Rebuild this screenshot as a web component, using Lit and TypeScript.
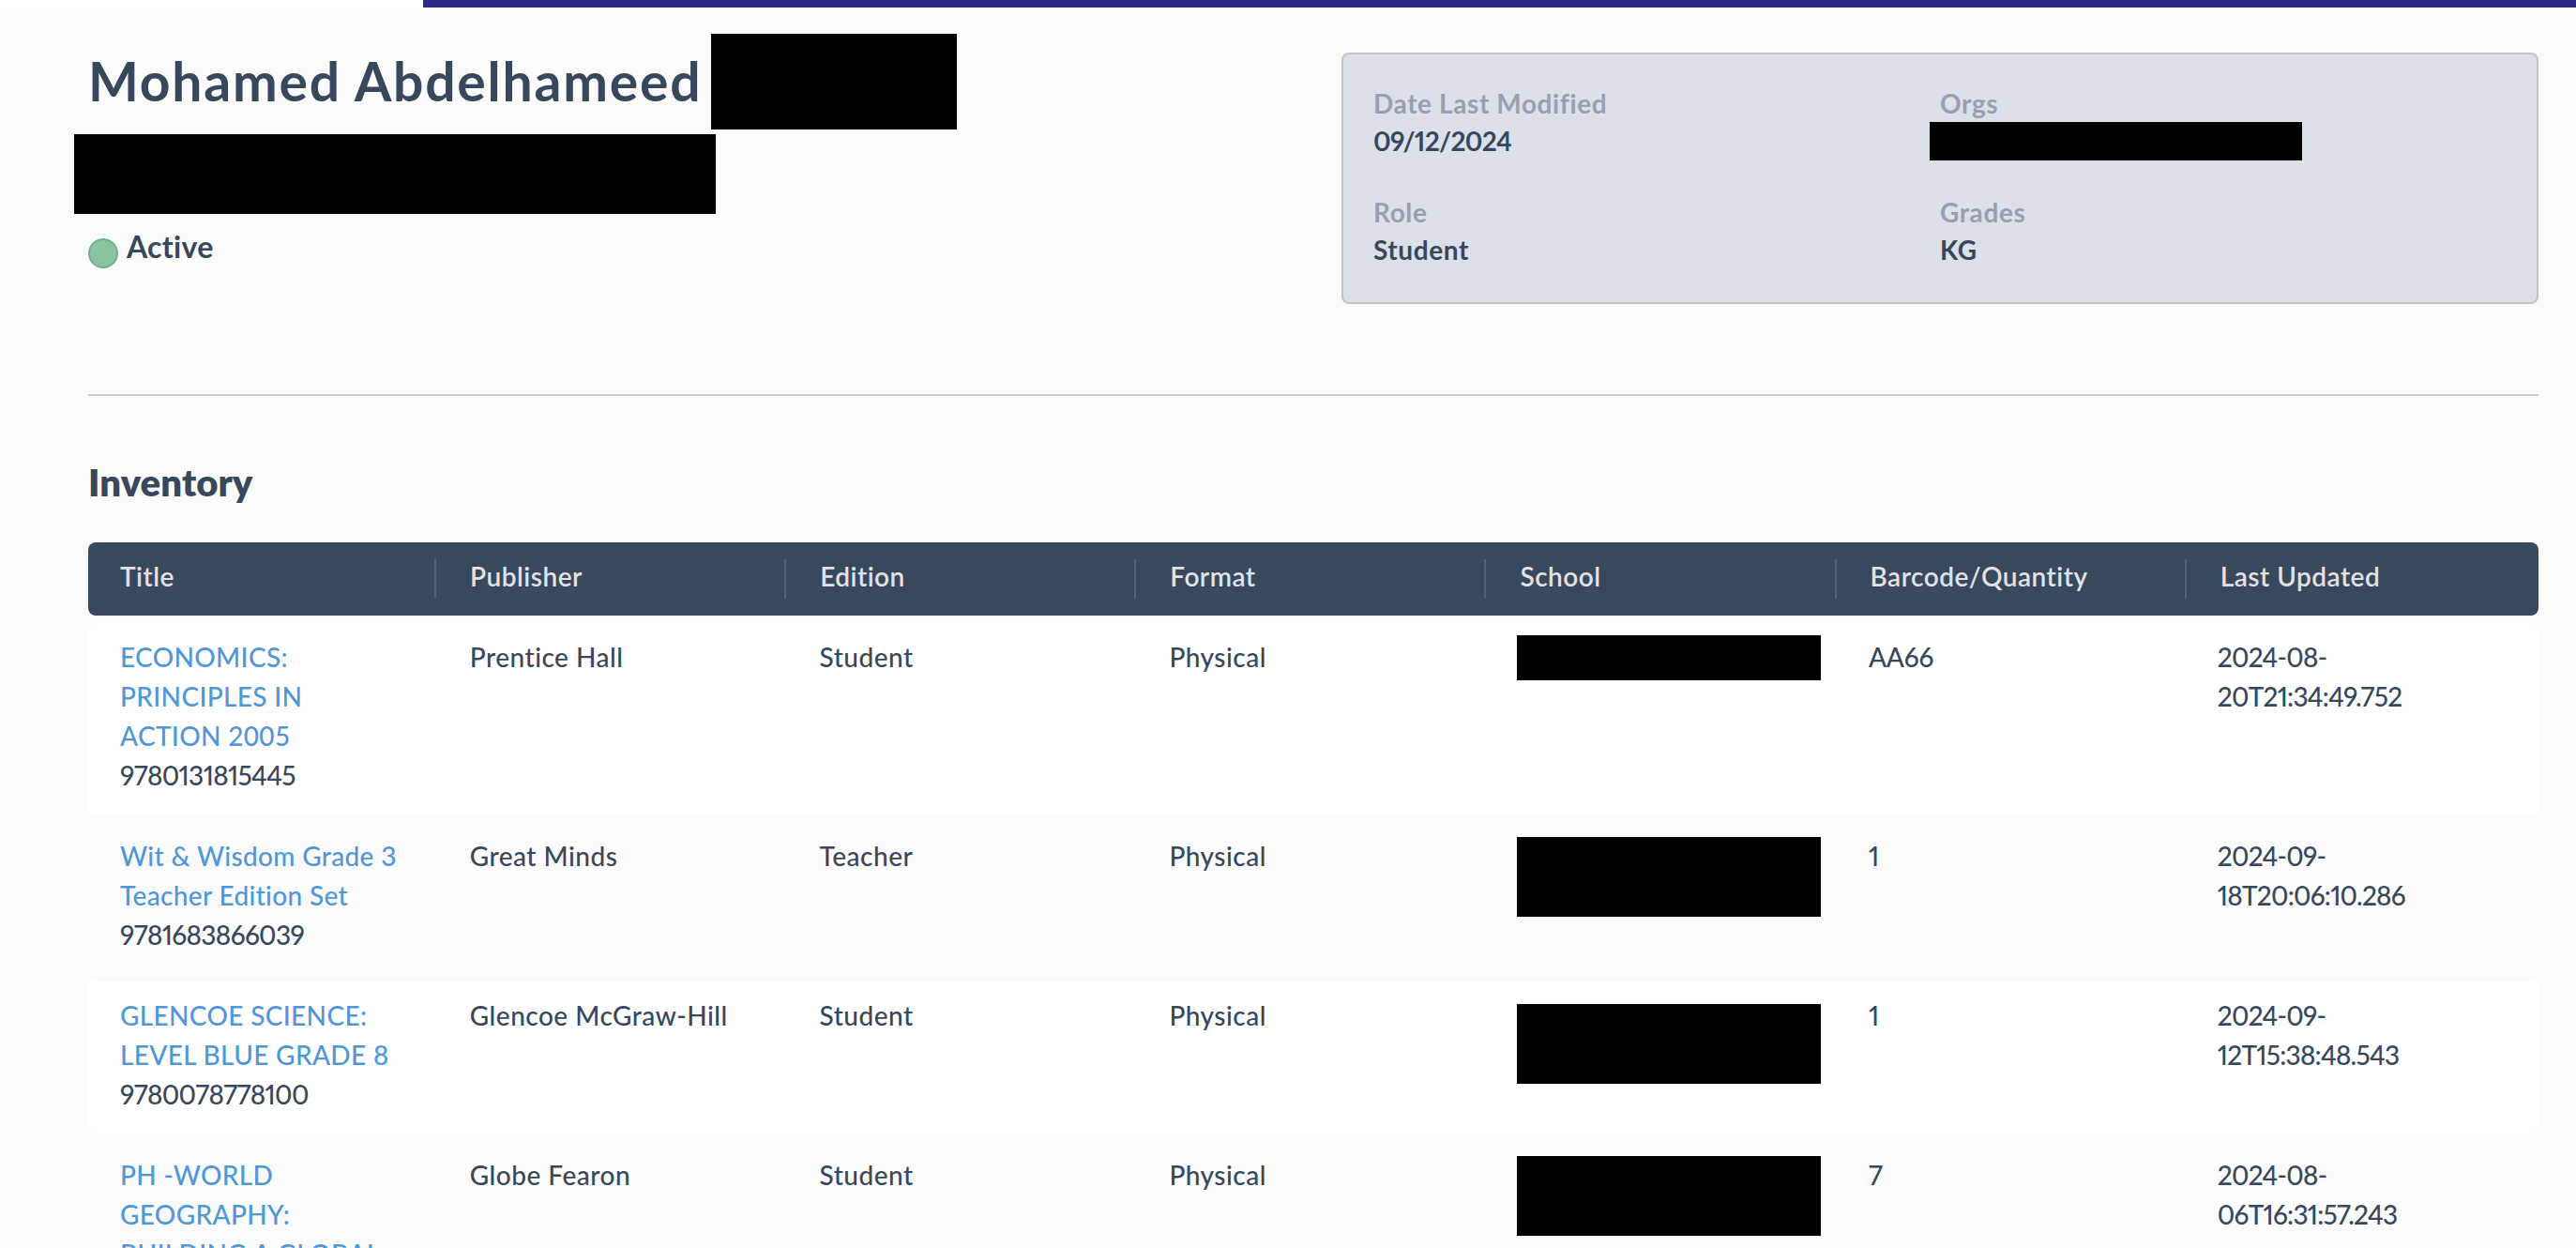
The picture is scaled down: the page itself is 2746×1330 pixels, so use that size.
import { LitElement, html, css } from 'lit';
import { customElement, property } from 'lit/decorators.js';

interface Item {
  title: string;
  isbn: string;
  publisher: string;
  edition: string;
  format: string;
  barcode: string;
  updated: string;
  // redaction bar over the school name: offset from the row top and height
  maskTop: number;
  maskHeight: number;
}

const ITEMS: Item[] = [
  {
    title: 'ECONOMICS:\nPRINCIPLES IN\nACTION 2005',
    isbn: '9780131815445',
    publisher: 'Prentice Hall',
    edition: 'Student',
    format: 'Physical',
    barcode: 'AA66',
    updated: '2024-08-\n20T21:34:49.752',
    maskTop: 13,
    maskHeight: 48,
  },
  {
    title: 'Wit & Wisdom Grade 3\nTeacher Edition Set',
    isbn: '9781683866039',
    publisher: 'Great Minds',
    edition: 'Teacher',
    format: 'Physical',
    barcode: '1',
    updated: '2024-09-\n18T20:06:10.286',
    maskTop: 16,
    maskHeight: 85,
  },
  {
    title: 'GLENCOE SCIENCE:\nLEVEL BLUE GRADE 8',
    isbn: '9780078778100',
    publisher: 'Glencoe McGraw-Hill',
    edition: 'Student',
    format: 'Physical',
    barcode: '1',
    updated: '2024-09-\n12T15:38:48.543',
    maskTop: 24,
    maskHeight: 85,
  },
  {
    title: 'PH -WORLD\nGEOGRAPHY:\nBUILDING A GLOBAL',
    isbn: '',
    publisher: 'Globe Fearon',
    edition: 'Student',
    format: 'Physical',
    barcode: '7',
    updated: '2024-08-\n06T16:31:57.243',
    maskTop: 16,
    maskHeight: 85,
  },
];

const COLUMNS = ['Title', 'Publisher', 'Edition', 'Format', 'School', 'Barcode/Quantity', 'Last Updated'];

const ROW_PADDING_TOP = 15;

@customElement('user-details')
export class UserDetails extends LitElement {
  static styles = css`
    :host {
      display: grid;
      grid-template-columns: 604px 1fr;
      grid-auto-rows: 80px;
      row-gap: 36px;
      box-sizing: border-box;
      width: 1276px;
      height: 268px;
      padding: 32px;
      border: 2px solid #bfc4cd;
      border-radius: 8px;
      background: #dce0e9;
      font-size: 28px;
      line-height: 40px;
      letter-spacing: 0.6px;
    }

    .label {
      color: #989fb1;
      font-weight: 700;
    }

    .value {
      color: #37485d;
      font-weight: 700;
    }

    .num {
      font-feature-settings: 'pnum';
      letter-spacing: -0.7px;
    }

    .mask {
      width: 397px;
      height: 41px;
      margin-left: -11px;
      background: #000;
    }
  `;

  render() {
    return html`
      <div>
        <div class="label">Date Last Modified</div>
        <div class="value num">09/12/2024</div>
      </div>
      <div>
        <div class="label">Orgs</div>
        <div class="mask"></div>
      </div>
      <div>
        <div class="label">Role</div>
        <div class="value">Student</div>
      </div>
      <div>
        <div class="label">Grades</div>
        <div class="value">KG</div>
      </div>
    `;
  }
}

@customElement('inventory-table')
export class InventoryTable extends LitElement {
  static styles = css`
    :host {
      display: flex;
      flex-direction: column;
      gap: 8px;
      font-size: 28px;
      font-weight: 500;
      line-height: 42px;
      letter-spacing: 0.5px;
      color: #37485d;
    }

    .head,
    .row {
      display: grid;
      border-radius: 8px;
    }

    .head {
      grid-template-columns: 371px repeat(5, 373.15px) 1fr;
      height: 78px;
      align-items: center;
      background: #38495e;
      color: #e2e2e6;
      font-weight: 600;
      line-height: 36px;
    }

    .th {
      box-sizing: border-box;
      height: 42px;
      padding-left: 36px;
      border-right: 2px solid #54626f;
    }

    .th:first-child {
      padding-left: 34px;
    }

    .th:last-child {
      border-right: 0;
    }

    .row {
      grid-template-columns: repeat(7, 372.8px);
      padding: 15px 0 21px;
    }

    .row:nth-child(even) {
      background: #fff;
    }

    .cell {
      padding-left: 34px;
      white-space: pre-line;
    }

    .link {
      color: #4f97d9;
      letter-spacing: 0.35px;
    }

    .num {
      font-feature-settings: 'pnum';
      letter-spacing: -0.65px;
    }

    .barcode {
      font-feature-settings: 'pnum';
      letter-spacing: -0.2px;
    }

    .updated {
      padding-left: 33px;
      letter-spacing: -0.75px;
    }

    .mask {
      width: 324px;
      margin-left: -2px;
      background: #000;
    }
  `;

  @property({ attribute: false }) items: Item[] = [];

  render() {
    return html`
      <div class="head">${COLUMNS.map((c) => html`<div class="th">${c}</div>`)}</div>
      ${this.items.map(
        (item) => html`
          <div class="row">
            <div class="cell"><div class="link">${item.title}</div><div class="num">${item.isbn}</div></div>
            <div class="cell">${item.publisher}</div>
            <div class="cell">${item.edition}</div>
            <div class="cell">${item.format}</div>
            <div class="cell"><div
              class="mask"
              style="height: ${item.maskHeight}px; margin-top: ${item.maskTop - ROW_PADDING_TOP}px"
            ></div></div>
            <div class="cell barcode">${item.barcode}</div>
            <div class="cell num updated">${item.updated}</div>
          </div>
        `
      )}
    `;
  }
}

@customElement('app-root')
export class AppRoot extends LitElement {
  static styles = css`
    :host {
      display: block;
      height: 1330px;
      overflow: hidden;
      background: #fbfbfb;
      color: #37485d;
      font-family: Lato, 'Open Sans', sans-serif;
      font-variant-ligatures: none;
    }

    .topbar {
      height: 8px;
      padding-left: 451px;
      background: linear-gradient(#2d2986, #2d2986) content-box, #fff;
    }

    .page {
      padding: 0 40px 0 94px;
    }

    .profile {
      display: flex;
      justify-content: space-between;
      height: 414px;
      box-sizing: border-box;
      border-bottom: 2px solid #c9cfd8;
    }

    .name {
      display: flex;
      align-items: center;
      gap: 12px;
      height: 102px;
      margin: 28px 0 0;
      font-size: 57px;
      font-weight: 700;
    }

    .name-text {
      width: 652px;
      margin-top: -2px;
      letter-spacing: 1.8px;
      white-space: nowrap;
    }

    .name-mask {
      width: 262px;
      height: 102px;
      background: #000;
    }

    .id-mask {
      width: 684px;
      height: 85px;
      margin: 5px 0 0 -15px;
      background: #000;
    }

    .status {
      display: flex;
      gap: 9px;
      margin-top: 14px;
      font-size: 32px;
      font-weight: 700;
      line-height: 42px;
      letter-spacing: 0.3px;
    }

    .dot {
      box-sizing: border-box;
      width: 32px;
      height: 32px;
      margin-top: 12px;
      border: 2px solid #73b08a;
      border-radius: 50%;
      background: #88c49f;
    }

    user-details {
      margin-top: 48px;
    }

    h2 {
      margin: 68px 0 40px;
      font-size: 40px;
      font-weight: 800;
      line-height: 48px;
      letter-spacing: 0.1px;
    }
  `;

  render() {
    return html`
      <div class="topbar"></div>
      <div class="page">
        <div class="profile">
          <div>
            <h1 class="name">
              <span class="name-text">Mohamed Abdelhameed</span>
              <span class="name-mask"></span>
            </h1>
            <div class="id-mask"></div>
            <div class="status"><span class="dot"></span><span>Active</span></div>
          </div>
          <user-details></user-details>
        </div>
        <h2>Inventory</h2>
        <inventory-table .items=${ITEMS}></inventory-table>
      </div>
    `;
  }
}
